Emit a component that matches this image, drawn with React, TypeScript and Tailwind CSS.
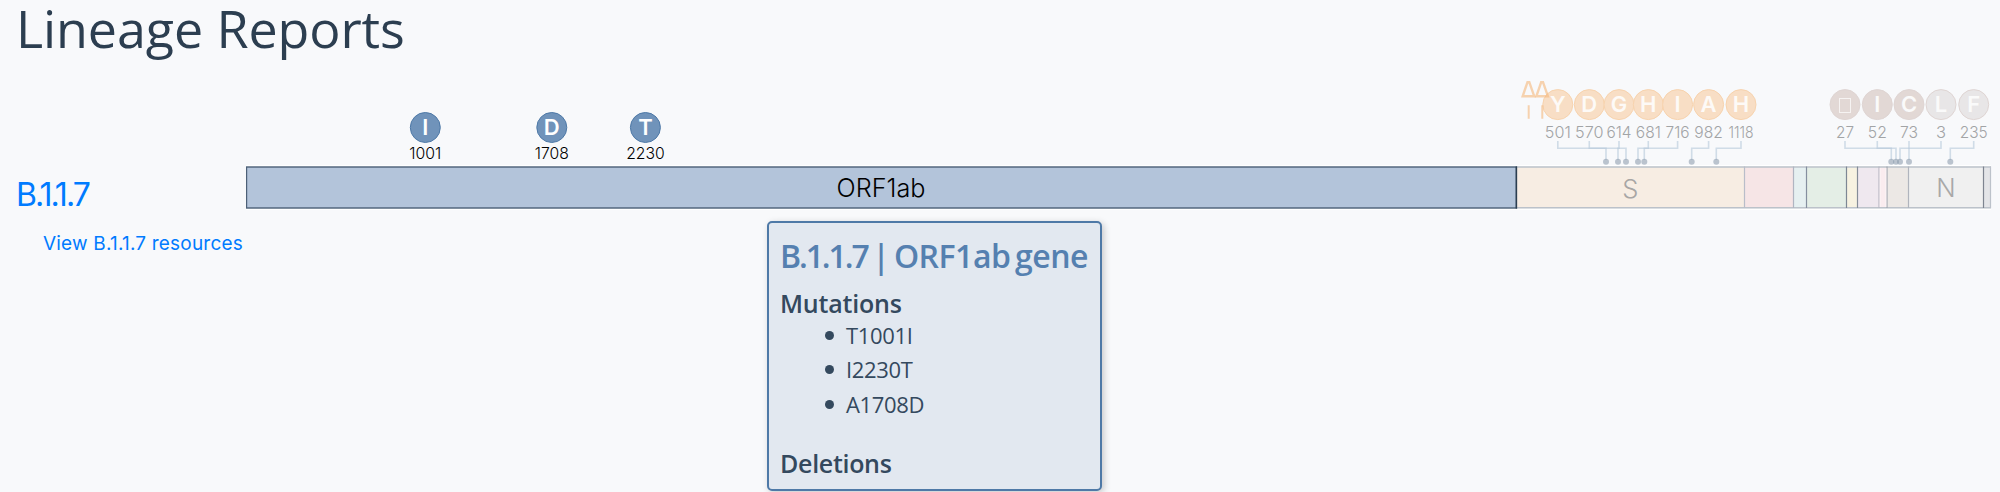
import React from "react";

type Marker = { letter: string; pos: string; x: number; w: number; dot: number };
type Gene = { x: number; end: number; fill: string; line: string };

const orfMarkers = [
  { letter: "I", pos: "1001", x: 425.3, w: 32 },
  { letter: "D", pos: "1708", x: 551.8, w: 34 },
  { letter: "T", pos: "2230", x: 645.4, w: 38.5 },
];

const spikeMarkers: Marker[] = [
  { letter: "Y", pos: "501", x: 1557.8, w: 26, dot: 1606 },
  { letter: "D", pos: "570", x: 1589.3, w: 28.5, dot: 1626 },
  { letter: "G", pos: "614", x: 1619, w: 25, dot: 1618 },
  { letter: "H", pos: "681", x: 1648.3, w: 25, dot: 1638 },
  { letter: "I", pos: "716", x: 1677.6, w: 24, dot: 1644.3 },
  { letter: "A", pos: "982", x: 1708.6, w: 28.5, dot: 1691.7 },
  { letter: "H", pos: "1118", x: 1741, w: 25, dot: 1716.3 },
];

const tailMarkers: (Marker & { fill: string })[] = [
  { letter: "", pos: "27", x: 1845, w: 18, dot: 1891.3, fill: "#e2d8d5" },
  { letter: "I", pos: "52", x: 1877.3, w: 19, dot: 1896, fill: "#e2d8d5" },
  { letter: "C", pos: "73", x: 1909, w: 18, dot: 1909, fill: "#e2d8d5" },
  { letter: "L", pos: "3", x: 1941, w: 10, dot: 1900, fill: "#e8e6e7" },
  { letter: "F", pos: "235", x: 1973.7, w: 28, dot: 1950.3, fill: "#e8e6e7" },
];

const genes: Gene[] = [
  { x: 1516.5, end: 1744.5, fill: "#f7ede3", line: "#b9bdc9" },
  { x: 1744.5, end: 1793.5, fill: "#f6e5e6", line: "#b0b5c2" },
  { x: 1793.5, end: 1806.5, fill: "#e6f0f1", line: "#858f9f" },
  { x: 1806.5, end: 1846.5, fill: "#e4eee6", line: "#7d8794" },
  { x: 1846.5, end: 1857.5, fill: "#f7f2e1", line: "#858c98" },
  { x: 1857.5, end: 1879, fill: "#efe8ef", line: "#b9b8c4" },
  { x: 1879, end: 1887, fill: "#faecef", line: "#a5a8b1" },
  { x: 1887, end: 1908.5, fill: "#ece8e5", line: "#b0b4bd" },
  { x: 1908.5, end: 1983.5, fill: "#f0f0f0", line: "#7e8490" },
  { x: 1983.5, end: 1990.5, fill: "#e4e5e8", line: "#bcc2ca" },
];

const FONT = "font-['Inter','Liberation_Sans',sans-serif]";

function Connectors({ items }: { items: Marker[] }) {
  return (
    <g>
      {items.map((m) => (
        <g key={m.pos}>
          <path
            d={`M${m.x} 141V148.3H${m.dot}V160`}
            fill="none"
            stroke="#b5c8da"
            strokeOpacity="0.6"
            strokeWidth="1.6"
          />
          <circle cx={m.dot} cy="161.8" r="3" fill="#8798a9" fillOpacity="0.55" />
          <text
            x={m.x - m.w / 2}
            y="138.3"
            textLength={m.w}
            lengthAdjust="spacingAndGlyphs"
            fontSize="16.5"
            fontWeight="300"
            fill="#a2a4a6"
          >
            {m.pos}
          </text>
        </g>
      ))}
    </g>
  );
}

function Bead({ x, y, letter, fill, stroke, color }: { x: number; y: number; letter: string; fill: string; stroke: string; color: string }) {
  return (
    <g>
      <circle cx={x} cy={y} r="15" fill={fill} stroke={stroke} strokeWidth="1" />
      <text x={x} y={y + 7.7} textAnchor="middle" fontSize="22" fontWeight="600" fill={color}>
        {letter}
      </text>
    </g>
  );
}

function GenomeMap() {
  return (
    <svg className={`block shrink-0 ${FONT}`} width="1754" height="150" viewBox="246 70 1754 150">
      <rect x="246" y="165" width="1745" height="1.2" fill="#ffffff" />
      <rect x="246" y="208.8" width="1745" height="1.2" fill="#ffffff" />
      {genes.map((g) => (
        <rect key={g.x} x={g.x} y="167" width={g.end - g.x} height="41" fill={g.fill} />
      ))}
      <path d="M1516 167H1991M1516 207.8H1991" stroke="#bcc2ca" strokeWidth="1.6" />
      {genes.map((g) => (
        <path key={g.end} d={`M${g.end} 166.5V208`} stroke={g.line} strokeWidth="1.2" />
      ))}
      <path d="M1880 168V207M1886 168V207" stroke="#ffffff" strokeOpacity="0.5" strokeWidth="1" />
      <rect x="246.5" y="167" width="1270" height="41" fill="#b3c4da" stroke="#4c6077" strokeWidth="1.4" />
      <path d="M1516.3 166.5V208.5" stroke="#2c3e50" strokeWidth="1.4" />

      <text x="836.5" y="197.4" textLength="89" lengthAdjust="spacingAndGlyphs" fontSize="25.5" fontWeight="300" fill="#000000">
        ORF1ab
      </text>
      <text x="1630.4" y="197.6" textAnchor="middle" fontSize="25.5" fontWeight="300" fill="#a8a6a5">
        S
      </text>
      <text x="1946" y="197.4" textAnchor="middle" fontSize="25.5" fontWeight="300" fill="#a8a8a8">
        N
      </text>

      {orfMarkers.map((m) => (
        <g key={m.pos}>
          <Bead x={m.x} y={127.5} letter={m.letter} fill="#7093ba" stroke="#4e79a7" color="#ffffff" />
          <text
            x={m.x - m.w / 2}
            y="159.4"
            textLength={m.w}
            lengthAdjust="spacingAndGlyphs"
            fontSize="16.5"
            fontWeight="300"
            fill="#000000"
          >
            {m.pos}
          </text>
        </g>
      ))}

      <Connectors items={spikeMarkers} />
      <Connectors items={tailMarkers} />

      {spikeMarkers.map((m) => (
        <Bead key={m.pos} x={m.x} y={104.6} letter={m.letter} fill="#f8dec5" stroke="#f7d3ae" color="#fdfaf7" />
      ))}
      {tailMarkers.map((m) => (
        <Bead key={m.pos} x={m.x} y={104.6} letter={m.letter} fill={m.fill} stroke="#dfd5d3" color="#fafafa" />
      ))}
      <rect x="1839.5" y="98.5" width="11" height="14" fill="none" stroke="#f6f3f2" strokeWidth="1" />

      <g fill="none" stroke="#f5b77c" strokeOpacity="0.6" strokeWidth="2.4">
        <path d="M1522.7 96.2L1527.5 82.2H1529.3L1534.2 96.2Z" />
        <path d="M1536.4 96.2L1541.2 82.2H1543L1547.9 96.2Z" />
        <path d="M1528.7 105.3V118.7M1542.3 105.3V118.7" strokeWidth="2" />
      </g>
    </svg>
  );
}

function GeneTooltip() {
  return (
    <div className="absolute left-[767px] top-[221px] h-[270px] w-[335px] whitespace-nowrap rounded-[5px] border-2 border-[#4e79a7] bg-[#e2e8f0] pl-[11px] font-['Open_Sans',sans-serif] text-[#34495e] shadow-[2px_2px_7px_rgba(0,0,0,0.2)]">
      <h2 className="mt-[11px] text-[32px] font-semibold leading-[44px] tracking-[-0.5px] text-[#5580b0]">
        <span className="tracking-[-2.1px]">B.1.1.7</span>
        <span className="[word-spacing:-3.2px]"> | ORF1ab gene</span>
      </h2>
      <h3 className="mt-[8px] text-[25px] font-semibold leading-[34px] tracking-[-0.2px]">Mutations</h3>
      <ul className="-mt-[2px] text-[22px] font-normal leading-[34.4px] tracking-[-0.35px]">
        {["T1001I", "I2230T", "A1708D"].map((m) => (
          <li key={m} className="flex items-center pl-[45px]">
            <span className="mr-[12px] size-[9px] rounded-full bg-[#34495e]" />
            {m}
          </li>
        ))}
      </ul>
      <h3 className="mt-[25px] text-[25px] font-semibold leading-[34px] tracking-[-0.3px]">Deletions</h3>
    </div>
  );
}

export default function App() {
  return (
    <main className={`relative h-[492px] w-[2000px] overflow-hidden bg-[#f8f9fb] ${FONT}`}>
      <header className="h-[70px] pl-[16px]">
        <h1 className="whitespace-nowrap font-['Open_Sans',sans-serif] text-[52px] font-normal leading-[55px] tracking-[-0.1px] text-[#2c3e50]">
          Lineage Reports
        </h1>
      </header>
      <section className="flex">
        <div className="w-[246px] shrink-0 whitespace-nowrap pl-[16px] pt-[105px] text-[#007bff]">
          <a className="block text-[32px] font-normal leading-[40px] tracking-[-2px]">B.1.1.7</a>
          <a className="mt-[14px] block pl-[27px] text-[19px] font-normal leading-[29px] tracking-[0.2px]">View B.1.1.7 resources</a>
        </div>
        <GenomeMap />
      </section>
      <GeneTooltip />
    </main>
  );
}
